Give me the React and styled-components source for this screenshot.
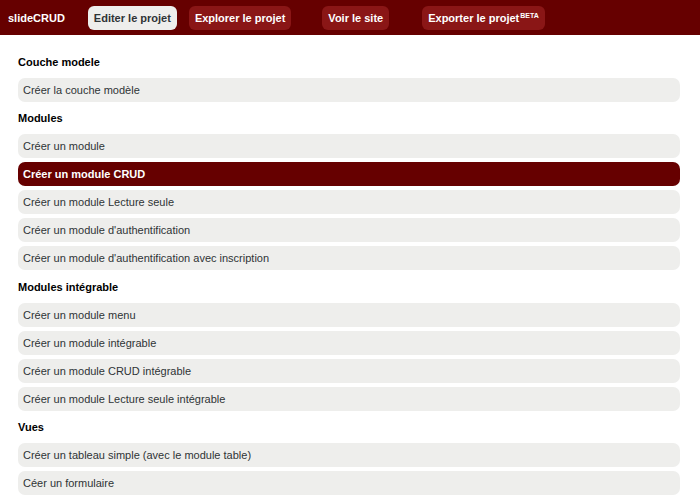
import React from "react";
import styled, { createGlobalStyle } from "styled-components";

const Global = createGlobalStyle`
  html, body { margin: 0; padding: 0; background: #fff; }
  body { font-family: "Liberation Sans", Arial, sans-serif; }
`;

const Header = styled.header`
  display: flex;
  align-items: center;
  height: 35px;
  padding: 0 8px;
  box-sizing: border-box;
  background: #660000;
`;

const Brand = styled.div`
  color: #fff;
  font-weight: bold;
  font-size: 11px;
  margin-right: 23px;
`;

const NavButton = styled.a`
  display: flex;
  align-items: center;
  height: 24px;
  padding: 0 6px;
  border-radius: 6px;
  font-size: 11px;
  font-weight: bold;
  text-decoration: none;
  color: ${(p) => (p.$active ? "#2e3436" : "#ffffff")};
  background: ${(p) => (p.$active ? "#eeeeec" : "#8a1616")};
  margin-right: ${(p) => p.$mr || 0}px;
  sup {
    font-size: 7px;
    margin-left: 1px;
    position: relative;
    top: -2px;
  }
`;

const Content = styled.main`
  display: flex;
  flex-direction: column;
  gap: 4px;
  padding: 15px 20px 0 18px;
`;

const Heading = styled.h2`
  margin: ${(p) => p.$top}px 0 4px;
  height: 16px;
  line-height: 16px;
  font-size: 11px;
  font-weight: bold;
  color: #000;
`;

const Item = styled.a`
  display: flex;
  align-items: center;
  height: 24px;
  padding: 0 5px;
  border-radius: 7px;
  font-size: 11px;
  text-decoration: none;
  color: ${(p) => (p.$active ? "#ffffff" : "#2e3436")};
  font-weight: ${(p) => (p.$active ? "bold" : "normal")};
  background: ${(p) => (p.$active ? "#660000" : "#eeeeec")};
`;

const sections = [
  { title: "Couche modele", top: 4, items: ["Créer la couche modèle"] },
  {
    title: "Modules",
    top: 4,
    items: [
      "Créer un module",
      "Créer un module CRUD",
      "Créer un module Lecture seule",
      "Créer un module d'authentification",
      "Créer un module d'authentification avec inscription",
    ],
  },
  {
    title: "Modules intégrable",
    top: 5,
    items: [
      "Créer un module menu",
      "Créer un module intégrable",
      "Créer un module CRUD intégrable",
      "Créer un module Lecture seule intégrable",
    ],
  },
  {
    title: "Vues",
    top: 4,
    items: ["Créer un tableau simple (avec le module table)", "Céer un formulaire"],
  },
];

export default function App() {
  return (
    <>
      <Global />
      <Header>
        <Brand>slideCRUD</Brand>
        <NavButton $active $mr={12}>Editer le projet</NavButton>
        <NavButton $mr={31}>Explorer le projet</NavButton>
        <NavButton $mr={33}>Voir le site</NavButton>
        <NavButton>
          Exporter le projet<sup>BETA</sup>
        </NavButton>
      </Header>
      <Content>
        {sections.map((s) => (
          <React.Fragment key={s.title}>
            <Heading $top={s.top}>{s.title}</Heading>
            {s.items.map((it) => (
              <Item key={it} $active={it === "Créer un module CRUD"}>
                {it}
              </Item>
            ))}
          </React.Fragment>
        ))}
      </Content>
    </>
  );
}
